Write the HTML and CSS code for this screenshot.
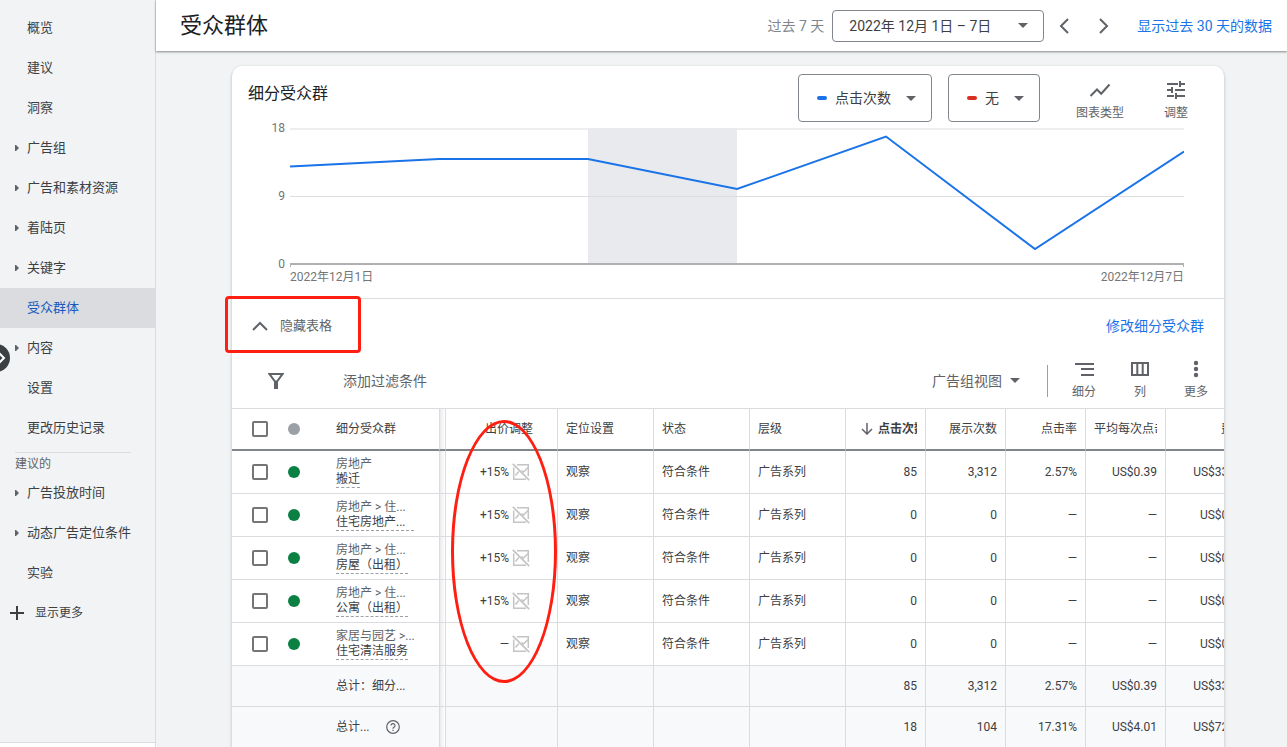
FILE: index.html
```html
<!DOCTYPE html>
<html lang="zh-CN">
<head>
<meta charset="utf-8">
<title>受众群体</title>
<link rel="stylesheet" href="styles.css">
</head>
<body>
<svg class="sprite" aria-hidden="true">
  <symbol id="caret" viewBox="0 0 10 5"><path d="M0 0h10L5 5z" fill="currentColor"/></symbol>
  <symbol id="tri" viewBox="0 0 4 6"><path d="M0 0h1l3 3-3 3H0z" fill="currentColor"/></symbol>
  <symbol id="noimg" viewBox="0 0 18 18"><path d="M5 1.700h11.300V13M1.700 4.500v11.800H14" fill="none" stroke="currentColor" stroke-width="1.500"/><path d="M3.500 12.500l3.300-4M9.500 7.500l2 1.500L16 4.500" fill="none" stroke="currentColor" stroke-width="1.500"/><path d="M.8 .8l16.400 16.400" stroke="currentColor" stroke-width="1.700"/></symbol>
</svg>
<div class="app">
  <nav class="sidebar">
    <div class="nav-body">
      <a class="nav-item" href="#">概览</a>
      <a class="nav-item" href="#">建议</a>
      <a class="nav-item" href="#">洞察</a>
      <a class="nav-item" href="#"><svg class="tri"><use href="#tri"/></svg>广告组</a>
      <a class="nav-item" href="#"><svg class="tri"><use href="#tri"/></svg>广告和素材资源</a>
      <a class="nav-item" href="#"><svg class="tri"><use href="#tri"/></svg>着陆页</a>
      <a class="nav-item" href="#"><svg class="tri"><use href="#tri"/></svg>关键字</a>
      <a class="nav-item selected" href="#">受众群体</a>
      <a class="nav-item" href="#"><svg class="tri"><use href="#tri"/></svg>内容</a>
      <a class="nav-item" href="#">设置</a>
      <a class="nav-item" href="#">更改历史记录</a>
      <div class="nav-heading">建议的</div>
      <a class="nav-item" href="#"><svg class="tri"><use href="#tri"/></svg>广告投放时间</a>
      <a class="nav-item" href="#"><svg class="tri"><use href="#tri"/></svg>动态广告定位条件</a>
      <a class="nav-item" href="#">实验</a>
      <button class="nav-more" type="button"><svg width="14" height="14" viewBox="0 0 14 14"><path d="M7 0v14M0 7h14" stroke="currentColor" stroke-width="2"/></svg>显示更多</button>
    </div>
    <button class="expander" type="button" aria-label="展开"><svg width="8" height="14" viewBox="0 0 8 14"><path d="M1 2l5 5-5 5" fill="none" stroke="#fff" stroke-width="2"/></svg></button>
  </nav>

  <main class="main">
    <header class="topbar">
      <h1>受众群体</h1>
      <label class="range-label" for="range">过去 7 天</label>
      <div class="picker date-picker">
        <select id="range"><option>2022年 12月 1日 – 7日</option></select>
        <svg class="caret"><use href="#caret"/></svg>
      </div>
      <button class="step" type="button" aria-label="上一个"><svg width="10" height="16" viewBox="0 0 10 16"><path d="M9 1L2 8l7 7" fill="none" stroke="currentColor" stroke-width="2"/></svg></button>
      <button class="step" type="button" aria-label="下一个"><svg width="10" height="16" viewBox="0 0 10 16"><path d="M1 1l7 7-7 7" fill="none" stroke="currentColor" stroke-width="2"/></svg></button>
      <a class="link" href="#">显示过去 30 天的数据</a>
    </header>

    <section class="card">
      <div class="card-head">
        <h2>细分受众群</h2>
        <div class="picker metric">
          <span class="dash blue"></span>
          <select aria-label="指标一"><option>点击次数</option></select>
          <svg class="caret"><use href="#caret"/></svg>
        </div>
        <div class="picker metric">
          <span class="dash red"></span>
          <select aria-label="指标二"><option>无</option></select>
          <svg class="caret"><use href="#caret"/></svg>
        </div>
        <button class="tool chart-type" type="button"><svg width="22" height="18" viewBox="0 0 22 18"><path d="M1.500 15l6.500-6.500 4.200 4.200L20.500 3.500" fill="none" stroke="currentColor" stroke-width="2"/></svg>图表类型</button>
        <button class="tool adjust" type="button"><svg width="20" height="18" viewBox="0 0 20 18"><path d="M1 3h11M14 3h5M14 0v6M1 9h5M9 9h10M6 6v6M1 15h7M11 15h8M10 12v6" fill="none" stroke="currentColor" stroke-width="2"/></svg>调整</button>
      </div>

      <div class="chart">
        <div class="y-axis"><span>18</span><span>9</span><span>0</span></div>
        <div class="plot">
          <svg class="plot-area" viewBox="0 0 894 140" preserveAspectRatio="none">
            <path d="M0 1h894" stroke="#eeeeee" stroke-width="2"/>
            <rect x="298" y="0" width="149" height="135" fill="#e8eaed"/>
            <path d="M0 68.500h894" stroke="#dedede"/>
            <path d="M0 136h894" stroke="#b0b0b0" stroke-width="2"/>
            <path d="M.5 135v4M893.500 135v4" stroke="#b0b0b0"/>
            <polyline points="0,38.500 149,31 298,31 447,61 596,8.500 745,121 894,23.500" fill="none" stroke="#1a73e8" stroke-width="2"/>
          </svg>
          <div class="x-axis"><span>2022年12月1日</span><span>2022年12月7日</span></div>
        </div>
      </div>

      <div class="toggle-row">
        <button class="toggle" type="button"><svg width="16" height="10" viewBox="0 0 16 10"><path d="M1 9l7-7 7 7" fill="none" stroke="currentColor" stroke-width="2"/></svg>隐藏表格</button>
        <a class="link" href="#">修改细分受众群</a>
      </div>

      <div class="toolbar">
        <button class="filter" type="button"><svg width="16" height="16" viewBox="0 0 16 16"><path d="M1.500 1h13L9 8.500H7z" fill="none" stroke="currentColor" stroke-width="2"/><path d="M6 8h4v8H6z" fill="currentColor"/></svg>添加过滤条件</button>
        <div class="view">
          <select aria-label="视图"><option>广告组视图</option></select>
          <svg class="caret"><use href="#caret"/></svg>
        </div>
        <span class="rule"></span>
        <button class="tool" type="button"><svg width="20" height="18" viewBox="0 0 20 18"><path d="M1 4h19M7 9h13M7 15h13" stroke="currentColor" stroke-width="2"/></svg>细分</button>
        <button class="tool" type="button"><svg width="20" height="18" viewBox="0 0 20 18"><path d="M2 3h16v12H2zM7.300 3v12M12.700 3v12" fill="none" stroke="currentColor" stroke-width="2"/></svg>列</button>
        <button class="tool" type="button"><svg width="20" height="18" viewBox="0 0 20 18"><g fill="currentColor"><circle cx="10" cy="3" r="2.200"/><circle cx="10" cy="9" r="2.200"/><circle cx="10" cy="15" r="2.200"/></g></svg>更多</button>
      </div>

      <div class="table-wrap">
        <table>
          <colgroup><col class="c-check"><col class="c-dot"><col class="c-name"><col class="c-gap"><col class="c-bid"><col class="c-text"><col class="c-text"><col class="c-text"><col class="c-num"><col class="c-num"><col class="c-num"><col class="c-num"><col class="c-cost"></colgroup>
          <thead>
            <tr>
              <th class="check"><input type="checkbox" aria-label="全选"></th>
              <th class="status"><span class="dot gray"></span></th>
              <th class="name">细分受众群</th>
              <th class="gap"></th>
              <th class="num bid-head">出价调整</th>
              <th>定位设置</th><th>状态</th><th>层级</th>
              <th class="sorted"><div class="sort"><svg width="12" height="12" viewBox="0 0 12 12"><path d="M6 0v11M1 6l5 5 5-5" fill="none" stroke="#5f6368" stroke-width="1.500"/></svg><span>点击次数</span></div></th>
              <th class="num">展示次数</th><th class="num">点击率</th>
              <th><div class="clip">平均每次点击费用</div></th>
              <th class="num">费用</th>
            </tr>
          </thead>
          <tbody>
            <tr>
              <td class="check"><input type="checkbox" aria-label="搬迁"></td><td class="status"><span class="dot green"></span></td>
              <td class="name"><div class="path">房地产</div><a class="seg" href="#">搬迁</a></td><td class="gap"></td>
              <td class="bid"><div>+15%<svg class="noimg"><use href="#noimg"/></svg></div></td>
              <td>观察</td><td>符合条件</td><td>广告系列</td><td class="num">85</td><td class="num">3,312</td><td class="num">2.57%</td><td class="num">US$0.39</td><td class="num">US$33.12</td>
            </tr>
            <tr>
              <td class="check"><input type="checkbox" aria-label="住宅房地产"></td><td class="status"><span class="dot green"></span></td>
              <td class="name"><div class="path">房地产 &gt; 住...</div><a class="seg long" href="#">住宅房地产...</a></td><td class="gap"></td>
              <td class="bid"><div>+15%<svg class="noimg"><use href="#noimg"/></svg></div></td>
              <td>观察</td><td>符合条件</td><td>广告系列</td><td class="num">0</td><td class="num">0</td><td class="num">—</td><td class="num">—</td><td class="num">US$0.00</td>
            </tr>
            <tr>
              <td class="check"><input type="checkbox" aria-label="房屋（出租）"></td><td class="status"><span class="dot green"></span></td>
              <td class="name"><div class="path">房地产 &gt; 住...</div><a class="seg" href="#">房屋（出租）</a></td><td class="gap"></td>
              <td class="bid"><div>+15%<svg class="noimg"><use href="#noimg"/></svg></div></td>
              <td>观察</td><td>符合条件</td><td>广告系列</td><td class="num">0</td><td class="num">0</td><td class="num">—</td><td class="num">—</td><td class="num">US$0.00</td>
            </tr>
            <tr>
              <td class="check"><input type="checkbox" aria-label="公寓（出租）"></td><td class="status"><span class="dot green"></span></td>
              <td class="name"><div class="path">房地产 &gt; 住...</div><a class="seg" href="#">公寓（出租）</a></td><td class="gap"></td>
              <td class="bid"><div>+15%<svg class="noimg"><use href="#noimg"/></svg></div></td>
              <td>观察</td><td>符合条件</td><td>广告系列</td><td class="num">0</td><td class="num">0</td><td class="num">—</td><td class="num">—</td><td class="num">US$0.00</td>
            </tr>
            <tr>
              <td class="check"><input type="checkbox" aria-label="住宅清洁服务"></td><td class="status"><span class="dot green"></span></td>
              <td class="name"><div class="path">家居与园艺 &gt;...</div><a class="seg" href="#">住宅清洁服务</a></td><td class="gap"></td>
              <td class="bid"><div>—<svg class="noimg"><use href="#noimg"/></svg></div></td>
              <td>观察</td><td>符合条件</td><td>广告系列</td><td class="num">0</td><td class="num">0</td><td class="num">—</td><td class="num">—</td><td class="num">US$0.00</td>
            </tr>
          </tbody>
          <tfoot>
            <tr>
              <td></td><td></td><td class="name">总计：细分...</td><td class="gap"></td><td></td><td></td><td></td><td></td>
              <td class="num">85</td><td class="num">3,312</td><td class="num">2.57%</td><td class="num">US$0.39</td><td class="num">US$33.12</td>
            </tr>
            <tr>
              <td></td><td></td><td class="name"><div class="total">总计...<svg width="14" height="14" viewBox="0 0 14 14"><circle cx="7" cy="7" r="6.300" fill="none" stroke="currentColor" stroke-width="1.200"/><path d="M5 5.600a2 2 0 1 1 3 1.700c-.7.400-1 .7-1 1.400M7 9.700v1.300" fill="none" stroke="currentColor" stroke-width="1.200"/></svg></div></td><td class="gap"></td><td></td><td></td><td></td><td></td>
              <td class="num">18</td><td class="num">104</td><td class="num">17.31%</td><td class="num">US$4.01</td><td class="num">US$72.18</td>
            </tr>
          </tfoot>
        </table>
      </div>
      <div class="mark mark-box"></div>
      <div class="mark mark-oval"></div>
    </section>
  </main>
</div>
</body>
</html>
```
FILE: styles.css
```css
* { box-sizing: border-box; }
body {
  margin: 0;
  font-family: Roboto, "Noto Sans CJK SC", sans-serif;
  font-size: 14px;
  line-height: 20px;
  color: #3c4043;
  background: #f1f3f4;
}
button, select, input { font: inherit; color: inherit; margin: 0; }
button { border: 0; padding: 0; background: none; cursor: pointer; }
select { appearance: none; border: 0; padding: 0; background: none; outline: none; }
a { color: inherit; text-decoration: none; }
svg { display: block; flex: none; }
h1, h2 { margin: 0; font-weight: 400; color: #202124; }
.sprite { position: absolute; width: 0; height: 0; }
.app { display: flex; height: 100vh; overflow: hidden; }

.sidebar { position: relative; flex: none; width: 156px; background: #fff; border-right: 1px solid #dadce0; padding-bottom: 4px; }
.nav-body { height: 100%; padding-top: 8px; background: #f1f3f4; border-bottom: 1px solid #dadce0; overflow: hidden; }
.nav-item { display: flex; align-items: center; height: 40px; padding-left: 27px; font-size: 13px; }
.selected { background: #dadce0; color: #185abc; }
.tri { width: 4px; height: 6px; margin: 0 8px 0 -12px; color: #5f6368; }
.nav-heading { margin: 4px 24px 0 15px; padding-top: 2px; border-top: 1px solid #dadce0; font-size: 12px; line-height: 18px; color: #5f6368; }
.nav-more { display: flex; align-items: center; gap: 11px; height: 40px; padding-left: 10px; font-size: 12px; }
.expander { position: absolute; left: -18px; top: 344px; width: 28px; height: 28px; border-radius: 50%; background: #3c4043; display: flex; align-items: center; justify-content: flex-end; padding-right: 4px; }

.main { flex: 1; min-width: 0; }
.topbar { position: relative; display: flex; align-items: center; height: 51px; padding-right: 15px; padding-left: 24px; background: #fff; box-shadow: 0 1px 2px rgba(60, 64, 67, .6); }
.topbar h1 { flex: 1; font-size: 22px; line-height: 32px; }
.range-label { color: #80868b; margin-right: 8px; }
.picker { display: flex; align-items: center; border: 1px solid #80868b; border-radius: 4px; background: #fff; }
.caret { width: 10px; height: 5px; color: #5f6368; pointer-events: none; }
.date-picker { height: 32px; width: 212px; padding: 0 15px 0 16px; justify-content: space-between; margin-right: 15px; }
.step { color: #5f6368; margin-right: 30px; }
.step + .link { margin-left: -2px; }
.link { color: #1a73e8; }

.card { position: relative; margin: 15px 63px 0 76px; background: #fff; border-radius: 10px 10px 0 0; box-shadow: 0 1px 3px rgba(60, 64, 67, .35); }
.card-head { display: flex; gap: 16px; padding: 8px 36px 0 16px; }
.card-head h2 { flex: 1; font-size: 16px; line-height: 24px; padding-top: 8px; }
.metric { height: 48px; padding: 0 15px 0 18px; gap: 8px; }
.metric .caret { margin-left: 7px; }
.dash { width: 10px; height: 4px; border-radius: 2px; }
.blue { background: #1a73e8; }
.red { background: #d93025; }
.tool { display: flex; flex-direction: column; align-items: center; gap: 5px; font-size: 12px; line-height: 18px; color: #5f6368; }
.card-head .tool { padding-top: 7px; }
.chart-type { margin-left: 20px; }
.adjust { margin-left: 24px; }

.chart { display: flex; gap: 5px; padding-right: 40px; font-size: 12px; line-height: 12px; color: #757575; }
.y-axis { display: flex; flex-direction: column; justify-content: space-between; width: 53px; height: 148px; text-align: right; }
.plot { flex: 1; padding-top: 6px; }
.plot-area { width: 100%; height: 140px; }
.x-axis { display: flex; justify-content: space-between; line-height: 18px; height: 30px; }

.toggle-row { display: flex; align-items: center; justify-content: space-between; height: 55px; padding: 0 20px; border-top: 1px solid #dadce0; }
.toggle { display: flex; align-items: center; gap: 12px; font-size: 13px; color: #5f6368; }
.toolbar { display: flex; align-items: center; height: 56px; padding-left: 36px; border-bottom: 1px solid #dadce0; color: #5f6368; }
.filter { display: flex; align-items: center; gap: 59px; margin-right: auto; }
.view { display: flex; align-items: center; gap: 8px; }
.rule { width: 1px; height: 32px; margin: 0 8px 0 27px; background: #9aa0a6; }
.toolbar .tool { width: 56px; }

.table-wrap { overflow: hidden; }
table { width: 100%; min-width: 1022px; table-layout: fixed; border-spacing: 0; font-size: 12px; line-height: 15px; }
.c-check { width: 52px; }
.c-dot { width: 52px; }
.c-name { width: 104px; }
.c-gap { width: 6px; }
.c-bid { width: 112px; }
.c-text { width: 96px; }
.c-num { width: 80px; }
.c-cost { width: 88px; }
th, td { padding: 0 8px; text-align: left; font-weight: 400; white-space: nowrap; border-right: 1px solid #dadce0; border-bottom: 1px solid #dadce0; }
th { height: 42px; border-bottom: 2px solid #80868b; }
td { height: 43px; }
tfoot td { height: 41px; background: #f8f9fa; }
.check, .status, tfoot td:nth-child(-n+2) { border-right: 0; }
.check { padding-left: 20px; }
.status { padding-left: 4px; }
.name { padding: 0; }
.gap { padding: 0; }
.gap, tfoot .gap { background: linear-gradient(90deg, #e8eaed, #fff); }
.num { text-align: right; }
.bid-head { padding-right: 24px; }
.bid { padding-right: 27px; }
.bid div { display: flex; align-items: center; justify-content: flex-end; gap: 3px; }
.noimg { width: 18px; height: 18px; color: #c4c4c4; }
input[type="checkbox"] { appearance: none; display: block; width: 16px; height: 16px; border: 2px solid #757575; border-radius: 2px; }
.dot { display: block; width: 12px; height: 12px; border-radius: 50%; }
.gray { background: #9aa0a6; }
.green { background: #0b8043; }
.path { color: #5f6368; }
.seg { display: inline-block; vertical-align: top; border-bottom: 1px dashed #9aa0a6; margin-bottom: -1px; }
.long { padding-right: 8px; }
.sort { display: flex; align-items: center; justify-content: flex-end; gap: 5px; font-weight: 700; }
.sort span { width: 39px; overflow: hidden; }
.clip { overflow: hidden; }
.total { display: flex; align-items: center; gap: 16px; }
.total svg { color: #5f6368; }

.mark { position: absolute; border: 3px solid #ff1e12; pointer-events: none; }
.mark-box { left: -7px; top: 230px; width: 136px; height: 57px; border-radius: 4px; }
.mark-oval { left: 219px; top: 354px; width: 106px; height: 263px; border-radius: 50%; }
```
